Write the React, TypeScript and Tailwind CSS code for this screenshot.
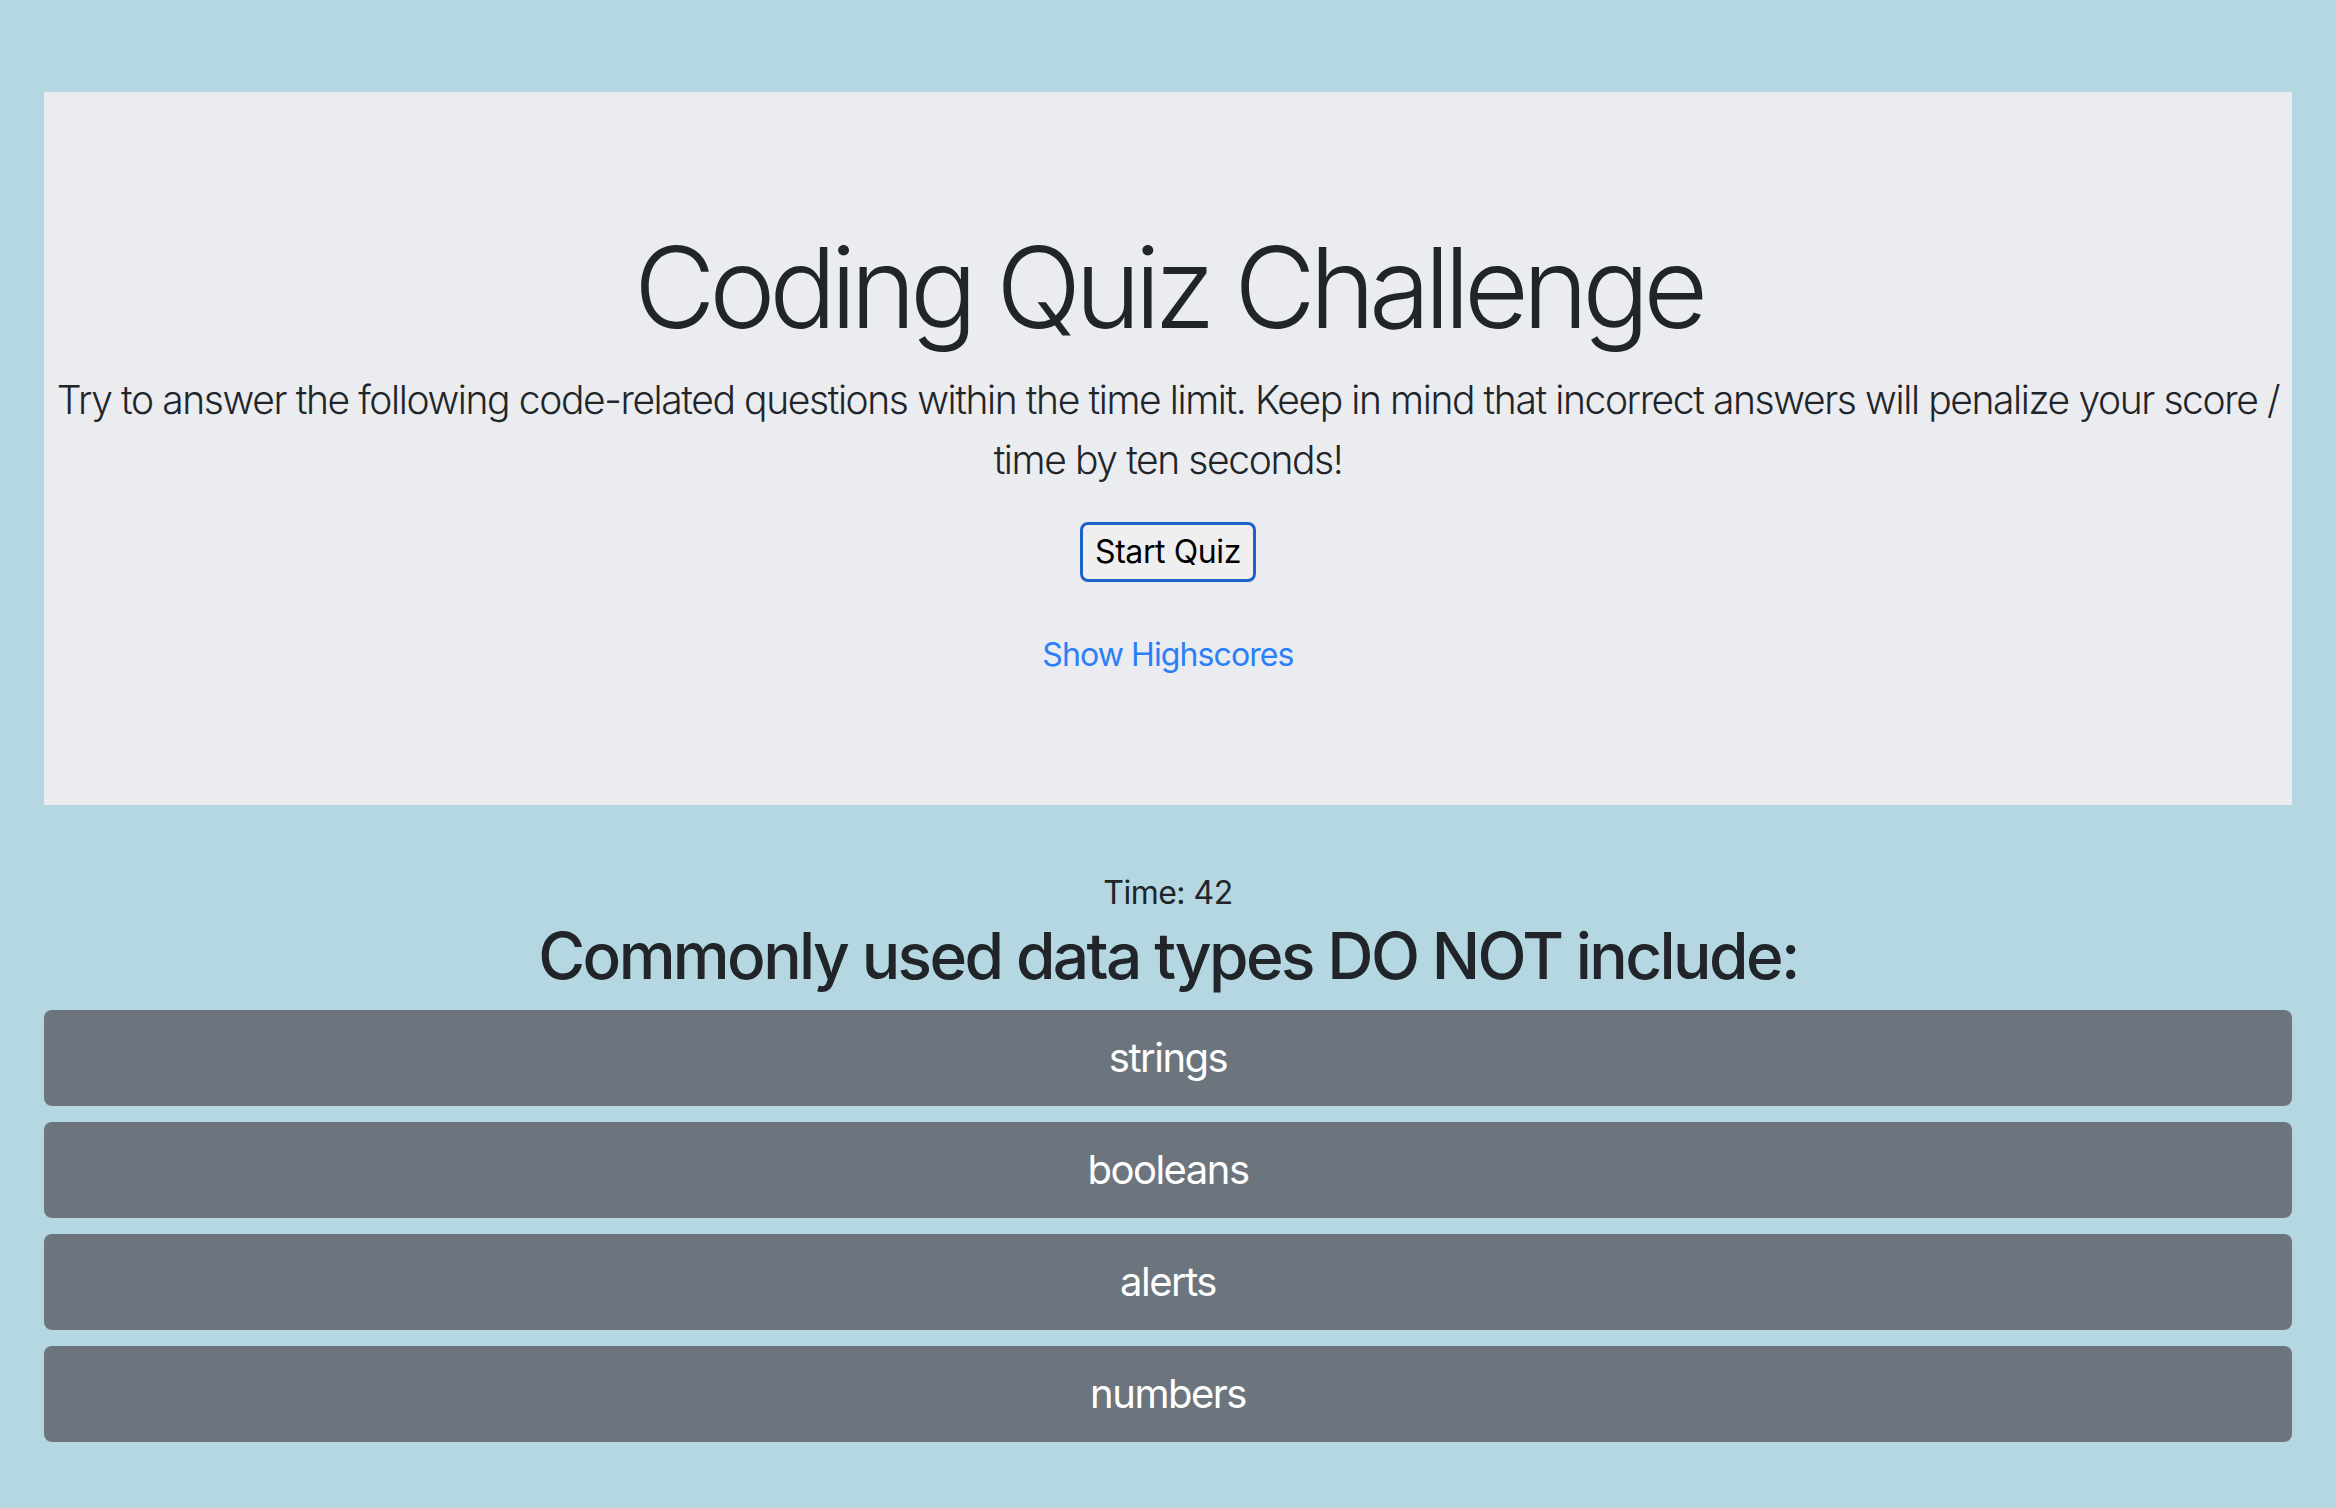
const answers = ["strings", "booleans", "alerts", "numbers"];

export default function App() {
  return (
    <div className="min-h-[1508px] bg-[#b4d7e2] pt-[92px] px-[44px] font-['Inter','Liberation_Sans',sans-serif] text-[#212529]">
      <div className="bg-[#eaecf0] pt-[128px] pb-[126px] px-[4px] text-center">
        <h1 className="text-[112px] leading-[134px] font-light tracking-[-6.3px]">
          Coding Quiz Challenge
        </h1>
        <p className="mt-[16px] text-[39px] leading-[60px] font-light tracking-[-1.4px]">
          Try to answer the following code-related questions within the time limit. Keep in mind that
          incorrect answers will penalize your score / time by ten seconds!
        </p>
        <button className="mt-[32px] w-[176px] h-[60px] rounded-[8px] border-[3px] border-[#2062c6] bg-[#efefef] text-[32px] leading-none tracking-[-0.4px] text-black">
          Start Quiz
        </button>
        <div className="mt-[49px]">
          <a href="#" className="text-[32px] leading-[48px] tracking-[-0.9px] text-[#2d7ff9]">
            Show Highscores
          </a>
        </div>
      </div>

      <div className="mt-[64px] text-center">
        <p className="text-[32px] leading-[48px] tracking-[-0.5px]">Time: 42</p>
        <h2 className="text-[64px] leading-[77px] font-medium tracking-[-2.6px]">
          Commonly used data types DO NOT include:
        </h2>
        <div className="mt-[16px] flex flex-col gap-[16px]">
          {answers.map((answer) => (
            <button
              key={answer}
              className="h-[96px] w-full rounded-[8px] bg-[#6c757d] text-[40px] leading-[60px] tracking-[-1.5px] text-white"
            >
              {answer}
            </button>
          ))}
        </div>
      </div>
    </div>
  );
}
